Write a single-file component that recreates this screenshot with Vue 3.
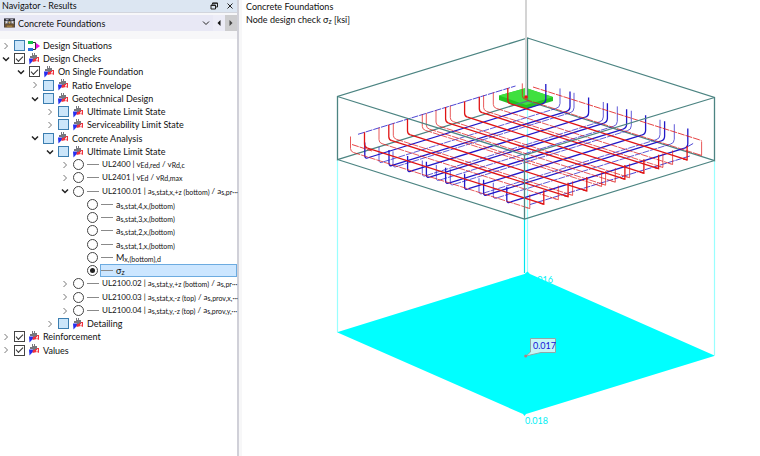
<script setup>
import { ref } from 'vue'

const category = ref('Concrete Foundations')
const selected = ref('sigma')

const rows = ref([
  { id: 'situations', level: 0, open: false, check: 'partial', icon: 'situation', parts: [['t', 'Design Situations']] },
  { id: 'checks', level: 0, open: true, check: 'on', icon: 'design', parts: [['t', 'Design Checks']] },
  { id: 'single', level: 1, open: true, check: 'on', icon: 'design', parts: [['t', 'On Single Foundation']] },
  { id: 'ratio', level: 2, open: false, check: 'partial', icon: 'design', parts: [['t', 'Ratio Envelope']] },
  { id: 'geo', level: 2, open: true, check: 'partial', icon: 'design', parts: [['t', 'Geotechnical Design']] },
  { id: 'geo-uls', level: 3, open: false, check: 'partial', icon: 'design', parts: [['t', 'Ultimate Limit State']] },
  { id: 'geo-sls', level: 3, open: false, check: 'partial', icon: 'design', parts: [['t', 'Serviceability Limit State']] },
  { id: 'concrete', level: 2, open: true, check: 'partial', icon: 'design', parts: [['t', 'Concrete Analysis']] },
  { id: 'con-uls', level: 3, open: true, check: 'partial', icon: 'design', parts: [['t', 'Ultimate Limit State']] },
  { id: 'ul2400', level: 4, open: false, parts: [['t', 'UL2400 | v'], ['s', 'Ed,red'], ['t', ' / v'], ['s', 'Rd,c']] },
  { id: 'ul2401', level: 4, open: false, parts: [['t', 'UL2401 | v'], ['s', 'Ed'], ['t', ' / v'], ['s', 'Rd,max']] },
  { id: 'ul2100-01', level: 4, open: true, parts: [['t', 'UL2100.01 | a'], ['s', 's,stat,x,+z (bottom)'], ['t', ' / a'], ['s', 's,pr···']] },
  { id: 'a4', level: 5, parts: [['t', 'a'], ['s', 's,stat,4,x,(bottom)']] },
  { id: 'a3', level: 5, parts: [['t', 'a'], ['s', 's,stat,3,x,(bottom)']] },
  { id: 'a2', level: 5, parts: [['t', 'a'], ['s', 's,stat,2,x,(bottom)']] },
  { id: 'a1', level: 5, parts: [['t', 'a'], ['s', 's,stat,1,x,(bottom)']] },
  { id: 'moment', level: 5, parts: [['t', 'M'], ['s', 'x,(bottom),d']] },
  { id: 'sigma', level: 5, parts: [['t', 'σ'], ['s', 'z']] },
  { id: 'ul2100-02', level: 4, open: false, parts: [['t', 'UL2100.02 | a'], ['s', 's,stat,y,+z (bottom)'], ['t', ' / a'], ['s', 's,pr···']] },
  { id: 'ul2100-03', level: 4, open: false, parts: [['t', 'UL2100.03 | a'], ['s', 's,stat,x,-z (top)'], ['t', ' / a'], ['s', 's,prov,x,···']] },
  { id: 'ul2100-04', level: 4, open: false, parts: [['t', 'UL2100.04 | a'], ['s', 's,stat,y,-z (top)'], ['t', ' / a'], ['s', 's,prov,y,···']] },
  { id: 'detailing', level: 3, open: false, check: 'partial', icon: 'design', parts: [['t', 'Detailing']] },
  { id: 'reinforcement', level: 0, open: false, check: 'on', icon: 'design', parts: [['t', 'Reinforcement']] },
  { id: 'values', level: 0, open: false, check: 'on', icon: 'design', parts: [['t', 'Values']] },
])

// Bar positions along the mesh edges: [x, main bar?]
const redStarts = [
  [350.5, 0], [364.5, 1], [379, 0], [388.8, 1], [393.3, 0], [407.5, 1], [422.3, 0], [426.3, 0], [436, 0],
  [445.6, 1], [450.3, 0], [464.6, 1], [479.3, 1], [483.6, 0], [493.3, 0], [507.8, 1], [522.3, 0],
]
const blueStarts = [
  [364.8, 1], [379, 0], [389, 1], [393, 0], [407.6, 1], [422.3, 0], [426.4, 1], [436.3, 0],
  [445.6, 1], [450.3, 0], [464.6, 1], [479, 0], [483.6, 1], [493.3, 0], [506.8, 1],
]

const redBars = redStarts.map(([x, main]) => {
  const y = 151.5 - (x - 350.5) * 0.309
  const ex = x + 179.3
  const ey = y + 57
  return {
    main,
    hook: `M${x} ${y - 15}V${y - 3}Q${x} ${y} ${x + 3} ${y + 1}`,
    bar: `M${x + 3} ${y + 1}L${ex} ${ey}`,
    end: `M${ex - 4} ${ey - 1}L${ex} ${ey}V${ey - 14}`,
  }
})
const blueBars = blueStarts.map(([x, main]) => {
  const y = 157.5 + (x - 364.8) * 0.313
  const ex = x + 181
  const ey = y - 54.5
  return {
    main,
    hook: `M${x} ${y - 15}V${y - 2}Q${x} ${y + 2} ${x + 4} ${y}`,
    bar: `M${x + 4} ${y}L${ex - 4} ${ey + 1}`,
    end: `M${ex - 4} ${ey + 1}Q${ex} ${ey} ${ex} ${ey - 4}V${ey - 19}`,
  }
})
</script>

<template>
  <div class="app">
    <aside class="navigator">
      <header class="title">
        <h1>Navigator - Results</h1>
        <button type="button" aria-label="Float panel">
          <svg viewBox="0 0 8 8"><path d="M2.500 2.500V1h5v4H6M1 3h4.500v4H1zM1 3.500h4.500M2.500 1.300h5" /></svg>
        </button>
        <button type="button" aria-label="Close panel">
          <svg viewBox="0 0 8 8"><path d="M1.500 1.500l5 5M6.500 1.500l-5 5" /></svg>
        </button>
      </header>

      <div class="picker">
        <label class="combo">
          <svg class="combo-icon" viewBox="0 0 12 12" aria-hidden="true">
            <path fill="#2e2e34" d="M0 1h12v3H0z" />
            <path fill="#c9c9dc" d="M2 2h3v1H2zM7 2h3v1H7z" />
            <path fill="#8f877c" d="M0 4h12v4H0z" />
            <path fill="#d9d9ea" d="M2 4h2v2H2zM8 4h2v2H8z" />
            <path fill="#3d3a38" d="M4 4h1v4H4zM7 4h1v4H7zM0 4h1v7H0zM11 4h1v7h-1z" />
            <path fill="#6d5133" d="M1 7h10v4H1z" />
            <path fill="#d6b04f" d="M5 5h2v1H5zM3 9h6v.8H3z" />
          </svg>
          <select v-model="category" aria-label="Result category">
            <option>Concrete Foundations</option>
          </select>
          <svg class="combo-arrow" viewBox="0 0 8 8" aria-hidden="true"><path d="M1 2.500l3 3 3-3" /></svg>
        </label>
        <button type="button" class="step" aria-label="Previous">
          <svg viewBox="0 0 8 8"><path fill="#111" d="M5.500 1v6l-3-3z" /></svg>
        </button>
        <button type="button" class="step step-next" aria-label="Next">
          <svg viewBox="0 0 8 8"><path fill="#444" d="M2.500 1v6l3-3z" /></svg>
        </button>
      </div>

      <ul class="tree">
        <li v-for="row in rows" :key="row.id" class="row" :class="'level-' + row.level">
          <button v-if="row.open !== undefined" type="button" class="toggle" :class="{ open: row.open }" :aria-label="row.open ? 'Collapse' : 'Expand'">
            <svg viewBox="0 0 8 8"><path :d="row.open ? 'M1 2.500l3 3 3-3' : 'M2.500 1l3 3-3 3'" /></svg>
          </button>
          <span v-else class="toggle"></span>

          <span class="control">
            <input v-if="row.check" :id="row.id" type="checkbox" class="box" :class="row.check" :checked="row.check === 'on'" />
            <input v-else :id="row.id" v-model="selected" type="radio" name="result" class="dot" :value="row.id" />
          </span>

          <label :for="row.id" class="label" :class="{ selected: selected === row.id }">
            <svg v-if="row.icon === 'situation'" class="icon" viewBox="0 0 12 12" aria-hidden="true">
              <path fill="none" stroke="#333" d="M4 2.500h3.500v7H4" />
              <path fill="#19c24a" d="M0 1h5v3H0z" />
              <path fill="#2b6fe0" d="M0 8h5v3H0z" />
              <path fill="#f010e0" d="M8 3l4 3-4 3z" />
            </svg>
            <svg v-else-if="row.icon" class="icon" viewBox="0 0 12 12" aria-hidden="true">
              <path fill="#2430f0" d="M1 5.500h6L1.500 11.500z" />
              <path fill="#f0303c" d="M5 4h6v5L9 8 4.500 9z" />
              <path fill="#fff" d="M9 5h.8v2.500H8V6.300h1z" />
              <path fill="#77777d" d="M4 0h1v2h1V0h1v2h2v3H7v1H5V5H2V3h2z" />
            </svg>
            <span v-else class="dash"></span>
            <span class="text"><template v-for="(part, i) in row.parts" :key="i"><sub v-if="part[0] === 's'">{{ part[1] }}</sub><template v-else>{{ part[1] }}</template></template></span>
          </label>
        </li>
      </ul>
    </aside>

    <main class="view">
      <div class="caption">
        <p>Concrete Foundations</p>
        <p>Node design check σ<sub>z</sub> [ksi]</p>
      </div>
      <svg class="scene" viewBox="242 0 518 456" role="img" aria-label="Foundation model with contact stress">
        <g class="drop">
          <path d="M337.500 160V332M714.500 161V355" />
          <path d="M527.500 101V273" />
          <path class="strong" d="M524.500 219V273" />
        </g>
        <text class="value" x="530" y="283">0.016</text>
        <path class="stress" d="M337 332.200L524.500 274l3-2.500 2.500 2.500L715 355.700 526 414l-1.500 2-1.500-2z" />
        <text class="value" x="525" y="424">0.018</text>

        <path class="slab" d="M499 95.500L526 88l27 9v4l-27 8-27-9z" />
        <path class="slab-top" d="M499 95.500L526 88l27 9-27 8z" />

        <g class="edges">
          <path d="M527.500 38L337.500 96.500V159.500L527.500 101zM527.500 38L714.500 97.500V160.500L527.500 101" />
        </g>

        <g class="blue">
          <path class="dashed" d="M358 134.300L515.500 86M530 204.500L690 156M687 147L694 143" />
          <g v-for="(bar, i) in blueBars" :key="i" :class="bar.main ? 'main' : 'minor'">
            <path :d="bar.hook" />
            <path class="bar" :d="bar.bar" />
            <path :d="bar.end" />
          </g>
        </g>
        <g class="red">
          <path class="dashed" d="M533 87L701.500 140.500M352 144.500L372 151" />
          <g v-for="(bar, i) in redBars" :key="i" :class="bar.main ? 'main' : 'minor'">
            <path :d="bar.hook" />
            <path class="bar" :d="bar.bar" />
            <path :d="bar.end" />
          </g>
        </g>

        <g class="edges">
          <path d="M337.500 96.500L524.500 155 714.500 97.500M337.500 159.500L524.500 219 714.500 160.500M524.500 155V219" />
        </g>
        <path class="column" d="M526 0V96" />
        <circle cx="526" cy="97" r="1.800" fill="#f01010" />

        <path class="callout" d="M530.500 338.500H555.500V352.500H541L526 356l4.500-4z" />
        <circle cx="525.700" cy="356" r="1.500" fill="#b08080" />
        <text class="callout-text" x="533" y="349">0.017</text>
      </svg>
    </main>
  </div>
</template>

<style>
body {
  margin: 0;
  background: #fff;
}
</style>

<style scoped>
.app {
  display: grid;
  grid-template-columns: 242px 1fr;
  min-height: 100vh;
  font-family: Lato, "Noto Sans", sans-serif;
  font-size: 9px;
  line-height: 13px;
  color: #111;
}

.navigator {
  display: flex;
  flex-direction: column;
  min-width: 0;
  border-right: 3px solid #f7f7f8;
  box-shadow: inset -2px 0 #d0d0d8;
  padding-right: 2px;
}

button {
  display: flex;
  align-items: center;
  justify-content: center;
  padding: 0;
  border: 0;
  background: none;
}

button svg,
.combo-arrow {
  width: 8px;
  height: 8px;
  fill: none;
  stroke: #222;
  stroke-width: 1;
}

.title {
  display: flex;
  align-items: center;
  gap: 8px;
  height: 12px;
  padding: 0 3px 0 2px;
  background: #dce6f2;
  border-bottom: 1px solid #d2d5dd;
}

.title h1 {
  flex: 1;
  margin: 0;
  font-size: 9px;
  font-weight: 400;
  line-height: 10px;
}

.picker {
  display: flex;
  height: 16px;
  padding: 2px 0 8px;
  background: #f7f7f9;
}

.combo {
  display: flex;
  flex: 1;
  align-items: center;
  gap: 3px;
  padding: 0 3px 0 4px;
  background: #e8e8f5;
}

.combo-icon {
  width: 11px;
  height: 12px;
}

.combo select {
  flex: 1;
  min-width: 0;
  padding: 0;
  border: 0;
  appearance: none;
  background: none;
  color: inherit;
  font: inherit;
}

.step {
  width: 12px;
  background: #ececf7;
}

.step svg {
  stroke: none;
}

.step-next {
  background: #cdcdcf;
}

.tree {
  margin: 0;
  padding: 0;
  list-style: none;
}

.row {
  display: flex;
  height: 13px;
}

.row:nth-child(4n) {
  height: 14px;
}

.level-1 { padding-left: 15px; }
.level-2 { padding-left: 29px; }
.level-3 { padding-left: 44px; }
.level-4 { padding-left: 59px; }
.level-5 { padding-left: 73px; }

.level-4 .text {
  font-size: 8px;
}

.toggle {
  flex: none;
  width: 12px;
}

.toggle path {
  stroke: #777;
}

.toggle.open path {
  stroke: #222;
  stroke-width: 1.5;
}

.control {
  display: flex;
  flex: none;
  align-items: center;
  justify-content: center;
  width: 15px;
}

.box,
.dot {
  display: grid;
  place-items: center;
  box-sizing: border-box;
  width: 11px;
  height: 11px;
  margin: 0;
  appearance: none;
  background: #fff;
  border: 1px solid #444;
}

.box.partial {
  background: #cce6fa;
  border-color: #3c7eb0;
}

.box.on::after {
  content: "";
  width: 7px;
  height: 4px;
  margin-bottom: 2px;
  border: solid #333;
  border-width: 0 0 1px 1px;
  box-sizing: border-box;
  transform: rotate(-45deg);
}

.dot {
  border-radius: 50%;
}

.dot:checked::after {
  content: "";
  width: 5px;
  height: 5px;
  border-radius: 50%;
  background: #222;
}

.label {
  display: flex;
  flex: 1;
  align-items: center;
  gap: 3px;
  min-width: 0;
  box-sizing: border-box;
  padding-left: 1px;
  white-space: nowrap;
}

.label.selected {
  background: #cce6ff;
  box-shadow: inset 0 0 0 1px #6cabe0;
}

.icon,
.dash {
  flex: none;
  width: 12px;
}

.icon {
  height: 12px;
}

.dash {
  height: 1px;
  background: #8a8a8a;
}

sub {
  font-size: 7px;
  line-height: 0;
  vertical-align: -1px;
}

.view {
  display: grid;
  align-items: start;
  min-width: 0;
}

.caption,
.scene {
  grid-area: 1 / 1;
}

.caption {
  padding-left: 4px;
}

.caption p {
  margin: 0;
}

.scene {
  display: block;
  width: 100%;
  fill: none;
}

.drop path {
  stroke: #9ff;
  stroke-width: 1.2;
}

.drop .strong {
  stroke: #00e5ee;
}

.value {
  fill: #00f0f5;
  font-size: 9px;
}

.stress {
  fill: #0ff;
}

.slab {
  fill: #22c322;
}

.slab-top {
  fill: #40e040;
}

.edges path {
  stroke: #4c8482;
  stroke-width: 1.3;
}

.blue {
  stroke: #2018c8;
}

.red {
  stroke: #e01414;
}

.main {
  stroke-width: 1.3;
}

.minor {
  stroke-width: 1;
  opacity: 0.7;
}

.minor .bar,
.dashed {
  stroke-dasharray: 7 1;
}

.dashed {
  opacity: 0.8;
}

.column {
  stroke: #d4d4d4;
  stroke-width: 2;
}

.callout {
  fill: #c5f5f5;
  stroke: #8fa8a8;
}

.callout-text {
  fill: #1414d8;
  font-size: 9px;
}
</style>
